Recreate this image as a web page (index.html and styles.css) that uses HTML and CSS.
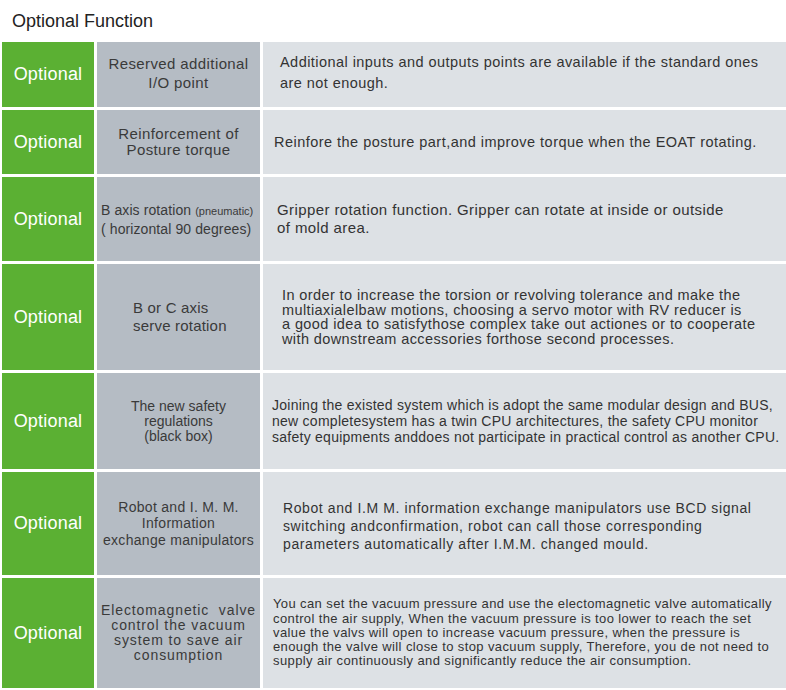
FILE: index.html
```html
<!DOCTYPE html>
<html>
<head>
<meta charset="utf-8">
<link rel="stylesheet" href="styles.css">
</head>
<body>
<h1 class="title">Optional Function</h1>
<div class="table">
  <div class="opt">Optional</div>
  <div class="name n1"><p>Reserved additional<br>I/O point</p></div>
  <div class="desc d1"><p>Additional inputs and outputs points are available if the standard ones<br>are not enough.</p></div>

  <div class="opt">Optional</div>
  <div class="name n2"><p>Reinforcement of<br>Posture torque</p></div>
  <div class="desc d2"><p>Reinfore the posture part,and improve torque when the EOAT rotating.</p></div>

  <div class="opt">Optional</div>
  <div class="name n3"><p>B axis rotation <span class="small">(pneumatic)</span><br>( horizontal 90 degrees)</p></div>
  <div class="desc d3"><p>Gripper rotation function. Gripper can rotate at inside or outside<br>of mold area.</p></div>

  <div class="opt">Optional</div>
  <div class="name n4"><p>B or C axis<br>serve rotation</p></div>
  <div class="desc d4"><p>In order to increase the torsion or revolving tolerance and make the<br>multiaxialelbaw motions, choosing a servo motor with RV reducer is<br>a good idea to satisfythose complex take out actiones or to cooperate<br>with downstream accessories forthose second processes.</p></div>

  <div class="opt">Optional</div>
  <div class="name n5"><p>The new safety<br>regulations<br>(black box)</p></div>
  <div class="desc d5"><p>Joining the existed system which is adopt the same modular design and BUS,<br>new completesystem has a twin CPU architectures, the safety CPU monitor<br>safety equipments anddoes not participate in practical control as another CPU.</p></div>

  <div class="opt">Optional</div>
  <div class="name n6"><p>Robot and I. M. M.<br>Information<br>exchange manipulators</p></div>
  <div class="desc d6"><p>Robot and I.M M. information exchange manipulators use BCD signal<br>switching andconfirmation, robot can call those corresponding<br>parameters automatically after I.M.M. changed mould.</p></div>

  <div class="opt">Optional</div>
  <div class="name n7"><p>Electomagnetic&nbsp; valve<br>control the vacuum<br>system to save air<br>consumption</p></div>
  <div class="desc d7"><p>You can set the vacuum pressure and use the electomagnetic valve automatically<br>control the air supply, When the vacuum pressure is too lower to reach the set<br>value the valvs will open to increase vacuum pressure, when the pressure is<br>enough the valve will close to stop vacuum supply, Therefore, you de not need to<br>supply air continuously and significantly reduce the air consumption.</p></div>
</div>
</body>
</html>
```
FILE: styles.css
```css
* { box-sizing: border-box; }
html, body { margin: 0; padding: 0; background: #fff; }
body {
  width: 786px;
  height: 690px;
  overflow: hidden;
  font-family: "Liberation Sans", Arial, sans-serif;
  color: #383838;
}
p { margin: 0; }
.title {
  margin: 0 0 10px 0;
  padding: 10px 0 0 12px;
  font-size: 18px;
  line-height: 22px;
  font-weight: normal;
  color: #222;
}
.table {
  display: grid;
  grid-template-columns: 92px 163px 523px;
  grid-template-rows: 65px 64px 84px 106px 96px 103px 110px;
  column-gap: 3px;
  row-gap: 3px;
  margin-left: 2px;
}
.opt {
  background: #5bb033;
  color: #fff;
  font-size: 18px;
  display: flex;
  align-items: center;
  justify-content: center;
  letter-spacing: 0.2px;
}
.name {
  background: #b5bcc4;
  display: flex;
  flex-direction: column;
  justify-content: center;
  text-align: center;
  font-size: 15px;
  line-height: 18px;
  color: #3a3a3a;
}
.desc {
  background: #dde1e5;
  display: flex;
  flex-direction: column;
  justify-content: center;
  font-size: 14.5px;
  color: #333;
  white-space: nowrap;
}
.small { font-size: 11px; letter-spacing: 0; }

.n1 { letter-spacing: 0.4px; line-height: 19px; padding-bottom: 4px; }
.n2 { letter-spacing: 0.4px; line-height: 16px; }
.n3 { font-size: 14px; letter-spacing: 0.1px; line-height: 18px; text-align: left; padding-left: 4px; white-space: nowrap; }
.n4 { letter-spacing: 0.2px; text-align: left; padding-left: 36px; line-height: 18px; }
.n5 { font-size: 14px; letter-spacing: 0; line-height: 15px; }
.n6 { font-size: 14px; letter-spacing: 0.3px; line-height: 16.5px; }
.n7 { font-size: 14px; letter-spacing: 0.9px; line-height: 15px; }

.d1 { padding-left: 17px; letter-spacing: 0.45px; line-height: 21px; padding-bottom: 4px; }
.d2 { padding-left: 11px; letter-spacing: 0.47px; line-height: 18px; }
.d3 { padding-left: 14px; font-size: 15px; letter-spacing: 0.4px; line-height: 18px; }
.d4 { padding-left: 19px; letter-spacing: 0.4px; line-height: 14.5px; }
.d5 { padding-left: 9px; font-size: 14px; letter-spacing: 0.26px; line-height: 16px; }
.d6 { padding-left: 20px; font-size: 14px; letter-spacing: 0.6px; line-height: 18px; padding-top: 4px; }
.d7 { padding-left: 10px; font-size: 13px; letter-spacing: 0.39px; line-height: 14.3px; }
```
